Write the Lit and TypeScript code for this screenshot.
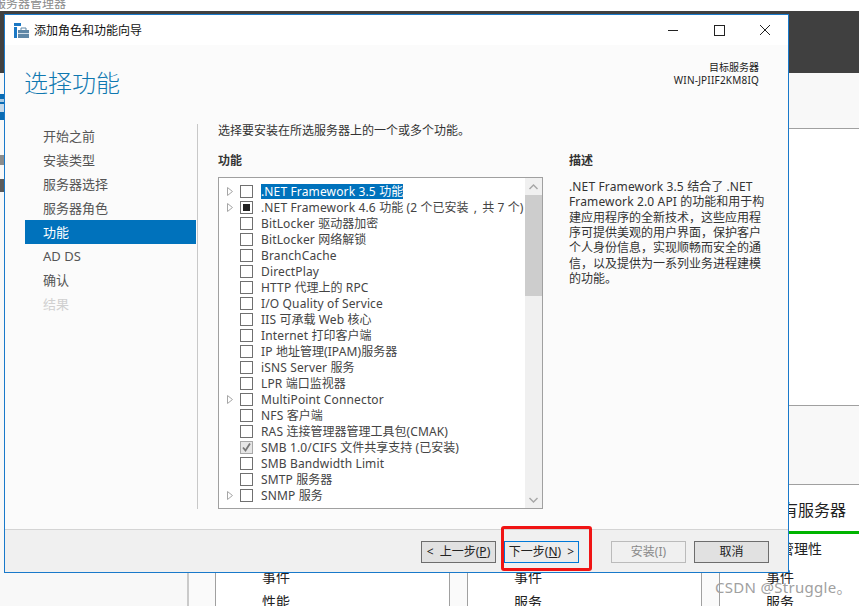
import { LitElement, html, css } from "lit";
import { customElement } from "lit/decorators.js";

type Row = { t: string; arrow?: boolean; c?: "" | "partial" | "checked"; sel?: boolean };
const rows: Row[] = [
  { t: ".NET Framework 3.5 功能", arrow: true, sel: true },
  { t: ".NET Framework 4.6 功能 (2 个已安装\u2009 , \u2009共 7 个)", arrow: true, c: "partial" },
  { t: "BitLocker 驱动器加密" },
  { t: "BitLocker 网络解锁" },
  { t: "BranchCache" },
  { t: "DirectPlay" },
  { t: "HTTP 代理上的 RPC" },
  { t: "I/O Quality of Service" },
  { t: "IIS 可承载 Web 核心" },
  { t: "Internet 打印客户端" },
  { t: "IP 地址管理(IPAM)服务器" },
  { t: "iSNS Server 服务" },
  { t: "LPR 端口监视器" },
  { t: "MultiPoint Connector", arrow: true },
  { t: "NFS 客户端" },
  { t: "RAS 连接管理器管理工具包(CMAK)" },
  { t: "SMB 1.0/CIFS 文件共享支持 (已安装)", c: "checked" },
  { t: "SMB Bandwidth Limit" },
  { t: "SMTP 服务器" },
  { t: "SNMP 服务", arrow: true },
];
const steps = ["开始之前", "安装类型", "服务器选择", "服务器角色", "功能", "AD DS", "确认", "结果"];
const descLines = [
  ".NET Framework 3.5 结合了 .NET",
  "Framework 2.0 API 的功能和用于构",
  "建应用程序的全新技术，这些应用程",
  "序可提供美观的用户界面，保护客户",
  "个人身份信息，实现顺畅而安全的通",
  "信，以及提供为一系列业务进程建模",
  "的功能。",
];

/* Latin runs are slightly wider in the reference than the CJK runs */
const latin = (t: string) =>
  t.split(/([\x20-\x7e]+)/).map((p, i) => (i % 2 ? html`<span class="lt">${p}</span>` : p));

@customElement("app-root")
export class AppRoot extends LitElement {
  static styles = css`
    :host { display: block; width: 859px; height: 606px; position: relative; overflow: hidden; background: #fff;
      font-family: "Noto Sans", "Noto Sans CJK SC", sans-serif; font-size: 12px; color: #333; }
    .lt { letter-spacing: .14px; white-space: pre; }
    .bgtitle { height: 11px; overflow: hidden; color: #8a8a8a; font-size: 12px; line-height: 7px; margin-left: -6px; }
    .dark { height: 62px; background: #404040; }
    .bg { display: grid; grid-template-columns: 187px 2px 26px 235px 17px 235px 17px 142px; grid-template-rows: 533px; height: 533px; overflow: hidden; }
    .leftcol { background: #f8f8f8; display: flex; flex-direction: column; }
    .leftcol b { display: block; width: 4px; flex: none; }
    .lb1 { height: 26px; margin-top: 21px; background: linear-gradient(#0a6cb4 0 5px, #a9c9e2 5px 8px, #0a6cb4 8px 10px, #c5d9ea 10px 18px, #0a6cb4 18px); }
    .lb2 { height: 10px; margin-top: 35px; background: #8c8c8c; }
    .lb3 { height: 13px; margin-top: 14px; background: #5a5a5a; }
    .vl { background: #cacaca; }
    .gap { background: #fafafa; }
    .card { background: #fff; border-left: 1px solid #a0a0a0; border-right: 1px solid #a0a0a0; display: flex; flex-direction: column; justify-content: flex-end; padding-left: 46px; font-size: 14px; color: #222; line-height: 20px; min-height: 0; overflow: hidden; }
    .card span { display: block; height: 25px; flex: none; white-space: nowrap; }
    .card .end { height: 14px; overflow: visible; }
    .last { display: flex; flex-direction: column; background: #fff; border-left: 1px solid #a0a0a0; color: #222; min-height: 0; overflow: hidden; }
    .band { background: #f8f8f8; flex: none; box-sizing: border-box; margin-left: -1px; border-bottom: 1px solid #a0a0a0; }
    .b1 { height: 56px; }
    .b2 { height: 80px; margin-top: 276px; border-top: 1px solid #a0a0a0; }
    .last h3 { margin: 0 0 0 -1px; padding: 14px 0 0 47px; height: 49px; box-sizing: border-box; flex: none; font-size: 16px; line-height: 22px; font-weight: 400; white-space: nowrap; border-bottom: 3px solid #00b400; }
    .last span { display: block; padding-left: 46px; font-size: 14px; line-height: 20px; height: 25px; flex: none; white-space: nowrap; }
    .last span:first-of-type { margin-top: 5px; height: 28px; }
    .win { position: absolute; left: 4px; top: 14px; width: 783px; height: 557px; border: 1px solid #1979ca; background: #fbfbfb; display: flex; flex-direction: column; }
    .titlebar { height: 30px; background: #fff; display: flex; align-items: center; padding-left: 9px; flex: none; color: #111; }
    .titlebar .name { margin-left: 5px; font-size: 12px; }
    .ctl { margin-left: auto; display: flex; }
    .ctl svg { display: block; width: 46px; height: 30px; }
    .head { height: 64px; flex: none; display: flex; justify-content: space-between; padding: 0 29px 0 20px; }
    h1 { margin: 20px 0 0 -1px; font-size: 24px; line-height: 36px; font-weight: 300; color: #0f78b0; }
    .srv { text-align: right; font-size: 10px; line-height: 13px; margin-top: 16px; color: #222; }
    .srv em { font-style: normal; letter-spacing: .2px; }
    .main { flex: 1; display: flex; min-height: 0; }
    .side { width: 192px; flex: none; padding: 15px 0 0 20px; box-sizing: border-box; }
    .side div { height: 24px; line-height: 24px; padding-left: 18px; width: 171px; box-sizing: border-box; font-size: 13px; color: #555; }
    .side .on { background: #0072bc; color: #fff; }
    .side .off { color: #d0d0d0; }
    .divider { width: 1px; background: #c8c8c8; margin: 15px 0 20px; flex: none; }
    .content { flex: 1; padding: 13px 0 0 20px; }
    .intro { line-height: 18px; height: 29px; color: #333; }
    .cols { display: flex; }
    .c1 { width: 351px; flex: none; }
    h2 { margin: 0; font-size: 12px; line-height: 20px; font-weight: 700; color: #333; height: 27px; }
    .list { width: 325px; height: 332px; border: 1px solid #a0a0a0; box-sizing: border-box; background: #fff; display: flex; margin-top: -1px; }
    .items { flex: 1; padding-top: 5px; overflow: hidden; }
    .row { height: 16px; display: flex; align-items: center; white-space: nowrap; color: #444; }
    .arrow { width: 21px; flex: none; display: flex; padding-left: 8px; box-sizing: border-box; }
    .box { width: 13px; height: 13px; border: 1px solid #707070; box-sizing: border-box; flex: none; margin-right: 8px; display: flex; align-items: center; justify-content: center; background: #fff; }
    .box i { width: 7px; height: 7px; background: #222; display: block; }
    .box.checked { background: #e6e6e6; border-color: #a8a8a8; }
    .row .txt { line-height: 15px; }
    .row .sel { background: #0072bc; color: #fff; }
    .sb { width: 17px; flex: none; background: #f0f0f0; display: flex; flex-direction: column; }
    .sb .up, .sb .dn { height: 17px; display: flex; align-items: center; justify-content: center; flex: none; }
    .sb .th { height: 101px; background: #cdcdcd; flex: none; }
    .sb .sp { flex: 1; }
    .desc { line-height: 15.33px; color: #333; margin-top: 1px; white-space: nowrap; }
    .foot { height: 43px; flex: none; background: #f0f0f0; border-top: 1px solid #d4d4d4; box-sizing: border-box; display: flex; align-items: center; padding: 1px 19px 0 416px; }
    .btn { width: 75px; height: 22px; box-sizing: border-box; border: 1px solid #6d6d6d; background: #e1e1e1; text-align: center; line-height: 20px; color: #222; white-space: nowrap; }
    .btn u { text-decoration: underline; }
    .btn .gapl { margin-left: 3px; }
    .btn.pri { border-color: #0078d7; margin-left: 8px; background: #ececec; }
    .btn.dis { border-color: #bbb; background: #f0f0f0; color: #8a8a8a; margin-left: 32px; }
    .btn.can { margin-left: 8px; }
    .red { position: absolute; left: 501px; top: 526px; width: 91px; height: 45px; box-sizing: border-box; border: 3px solid #f01414; border-radius: 3px; }
    .wm { position: absolute; left: 715px; top: 577px; font-size: 15px; line-height: 20px; color: #a0a0a0; letter-spacing: .3px; white-space: nowrap; }
  `;

  private tri() {
    return html`<svg width="6" height="9" viewBox="0 0 6 9"><path d="M.5.5 5.5 4.5.5 8.5Z" fill="#fff" stroke="#a6a6a6"/></svg>`;
  }

  render() {
    return html`
      <div class="bgtitle">服务器管理器</div>
      <div class="dark"></div>
      <div class="bg">
        <div class="leftcol"><b class="lb1"></b><b class="lb2"></b><b class="lb3"></b></div>
        <div class="vl"></div>
        <div class="gap"></div>
        <div class="card"><span>事件</span><span class="end">性能</span></div>
        <div class="gap"></div>
        <div class="card"><span>事件</span><span class="end">服务</span></div>
        <div class="gap"></div>
        <div class="last">
          <div class="band b1"></div>
          <div class="band b2"></div>
          <h3>所有服务器</h3>
          <span>可管理性</span>
          <span>事件</span>
          <span>服务</span>
        </div>
      </div>
      <div class="win">
        <div class="titlebar">
          <svg width="15" height="15" viewBox="0 0 15 15">
            <rect x="0" y="0" width="7" height="3" fill="#1b78c4"/>
            <rect x="0" y="4" width="3" height="11" fill="#1b78c4"/>
            <rect x="4" y="7" width="11" height="8" fill="#5f87a6"/>
            <path d="M7 7V5h5v2" fill="none" stroke="#5f87a6"/>
            <rect x="4" y="10" width="11" height="1" fill="#cfdde8"/>
          </svg>
          <span class="name">添加角色和功能向导</span>
          <div class="ctl">
            <svg viewBox="0 0 46 30"><path d="M18 15.5H28" stroke="#222"/></svg>
            <svg viewBox="0 0 46 30"><rect x="18.5" y="10.5" width="10" height="10" fill="none" stroke="#222"/></svg>
            <svg viewBox="0 0 46 30"><path d="M18 10 28 20M28 10 18 20" stroke="#222" fill="none"/></svg>
          </div>
        </div>
        <div class="head">
          <h1>选择功能</h1>
          <div class="srv">目标服务器<br /><em>WIN-JPIIF2KM8IQ</em></div>
        </div>
        <div class="main">
          <div class="side">
            ${steps.map((s, i) => html`<div class=${i === 4 ? "on" : i === 7 ? "off" : ""}>${s}</div>`)}
          </div>
          <div class="divider"></div>
          <div class="content">
            <div class="intro">选择要安装在所选服务器上的一个或多个功能。</div>
            <div class="cols">
              <div class="c1">
                <h2>功能</h2>
                <div class="list">
                  <div class="items">
                    ${rows.map(
                      (r) => html`<div class="row">
                        <span class="arrow">${r.arrow ? this.tri() : ""}</span>
                        <span class="box ${r.c ?? ""}">
                          ${r.c === "partial" ? html`<i></i>` : ""}
                          ${r.c === "checked"
                            ? html`<svg width="11" height="11" viewBox="0 0 11 11"><path d="M2 5.5 4.5 8.5 9 1.5" fill="none" stroke="#777" stroke-width="1.8"/></svg>`
                            : ""}
                        </span>
                        <span class="txt ${r.sel ? "sel" : ""}">${latin(r.t)}</span>
                      </div>`
                    )}
                  </div>
                  <div class="sb">
                    <div class="up"><svg width="9" height="6" viewBox="0 0 9 6"><path d="M.5 5 4.5 1 8.5 5" fill="none" stroke="#a6a6a6" stroke-width="1.4"/></svg></div>
                    <div class="th"></div>
                    <div class="sp"></div>
                    <div class="dn"><svg width="9" height="6" viewBox="0 0 9 6"><path d="M.5 1 4.5 5 8.5 1" fill="none" stroke="#a6a6a6" stroke-width="1.4"/></svg></div>
                  </div>
                </div>
              </div>
              <div>
                <h2>描述</h2>
                <div class="desc">${descLines.map((l) => html`<div>${latin(l)}</div>`)}</div>
              </div>
            </div>
          </div>
        </div>
        <div class="foot">
          <div class="btn">&lt; <span class="gapl">上一步(<u>P</u>)</span></div>
          <div class="btn pri">下一步(<u>N</u>) <span class="gapl">&gt;</span></div>
          <div class="btn dis">安装(I)</div>
          <div class="btn can">取消</div>
        </div>
      </div>
      <div class="red"></div>
      <div class="wm">CSDN @Struggle。</div>
    `;
  }
}
